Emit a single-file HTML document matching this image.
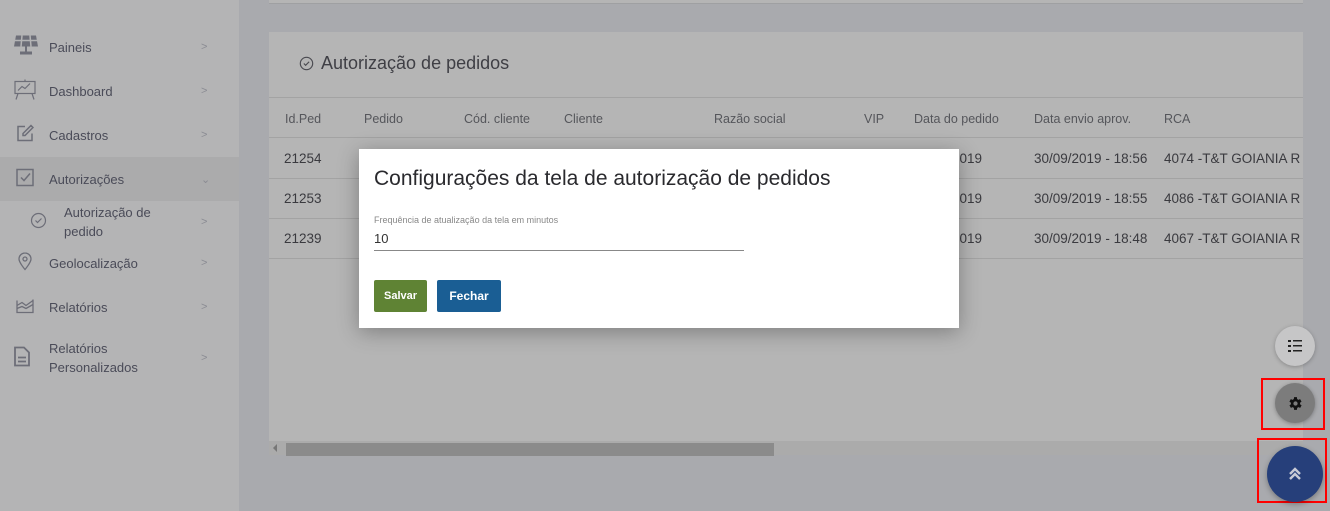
<!DOCTYPE html>
<html><head><meta charset="utf-8"><style>
*{box-sizing:border-box;margin:0;padding:0}
body{width:1330px;height:511px;overflow:hidden;background:#a9aaae;font-family:"Liberation Sans",sans-serif;position:relative}
.side{position:absolute;left:0;top:0;width:239px;height:511px;background:#b4b4b5}
.item{position:absolute;left:0;width:239px;height:44px;display:flex;align-items:center;color:#4a4b58;font-size:13px}
.item .ic{position:absolute;left:13px;top:50%;transform:translateY(-50%)}
.item .t{position:absolute;left:49px}
.item .ch{position:absolute;left:201px;color:#8a8b93;font-size:11px}
.topcard{position:absolute;left:269px;top:0;width:1034px;height:4px;background:#b5b5b5;border-bottom:1px solid #9fa0a2}
.card{position:absolute;left:269px;top:32px;width:1034px;height:423px;background:#b5b5b5}
.title{position:absolute;left:30px;top:21px;font-size:18px;color:#3f3f45;display:flex;align-items:center;gap:7px}
.hline{position:absolute;left:0;width:1034px;height:1px;background:#a3a3a3}
.th{position:absolute;top:80px;font-size:12.5px;color:#55565b}
.td{position:absolute;font-size:13.5px;color:#3a3a3f}
.scroll{position:absolute;left:0;top:409px;width:1034px;height:14px;background:#ababab}
.thumb{position:absolute;left:17px;top:2px;width:488px;height:13px;background:#8b8b8b}
.modal{position:absolute;left:359px;top:149px;width:600px;height:179px;background:#fff;box-shadow:0 4px 20px rgba(0,0,0,.3)}
.fab{position:absolute;border-radius:50%;display:flex;align-items:center;justify-content:center}
.red{position:absolute;border:2px solid #f00}
</style></head><body>
<div class="side">
 <div class="item" style="top:25px;background:transparent"><span class="ic"><svg width="26" height="22" viewBox="0 0 26 22"><path d="M3 1h20l2 11H1z" fill="#6d6e78"/><path d="M9 1l-1 11M17 1l1 11M2 6h22" stroke="#b4b4b5" stroke-width="1.5"/><rect x="12" y="12" width="2" height="5" fill="#6d6e78"/><rect x="7" y="17" width="12" height="3" fill="#6d6e78"/></svg></span><span class="t">Paineis</span><span class="ch">&gt;</span></div>
 <div class="item" style="top:69px"><span class="ic"><svg width="24" height="22" viewBox="0 0 24 22" fill="none" stroke="#6d6e78" stroke-width="1.2"><rect x="2" y="3" width="20" height="12"/><path d="M5 12l4-4 3 2 5-5M5 15l-2 6M19 15l2 6M12 1v2"/></svg></span><span class="t">Dashboard</span><span class="ch">&gt;</span></div>
 <div class="item" style="top:113px"><span class="ic" style="left:16px"><svg width="18" height="18" viewBox="0 0 18 18" fill="none" stroke="#6d6e78" stroke-width="1.5"><path d="M9 2H2v14h14V9"/><path d="M15 1l2 2-8 8H7V9z"/></svg></span><span class="t">Cadastros</span><span class="ch">&gt;</span></div>
 <div class="item" style="top:157px;background:#ababac"><span class="ic" style="left:16px"><svg width="18" height="18" viewBox="0 0 18 18" fill="none" stroke="#6d6e78" stroke-width="1.5"><rect x="1" y="1" width="16" height="16"/><path d="M5 9l3 3 6-7"/></svg></span><span class="t">Autorizações</span><span class="ch">&#8964;</span></div>
 <div class="item" style="top:201px;height:42px"><span class="ic" style="left:30px"><svg width="17" height="17" viewBox="0 0 17 17" fill="none" stroke="#6d6e78" stroke-width="1.2"><circle cx="8.5" cy="8.5" r="7"/><path d="M5.5 8.5l2 2 4-4"/></svg></span><span class="t" style="left:64px;line-height:19px">Autorização de<br>pedido</span><span class="ch">&gt;</span></div>
 <div class="item" style="top:241px"><span class="ic" style="left:18px"><svg width="14" height="18" viewBox="0 0 14 18" fill="none" stroke="#6d6e78" stroke-width="1.3"><path d="M7 17S1 10 1 6.5a6 6 0 0112 0C13 10 7 17 7 17z"/><circle cx="7" cy="6.5" r="2"/></svg></span><span class="t">Geolocalização</span><span class="ch">&gt;</span></div>
 <div class="item" style="top:285px"><span class="ic" style="left:16px"><svg width="18" height="16" viewBox="0 0 18 16" fill="none" stroke="#6d6e78" stroke-width="1.3"><path d="M1 3v12h16V2"/><path d="M1 8l5-3 4 3 7-5M1 11l5-2 4 2 7-4"/></svg></span><span class="t">Relatórios</span><span class="ch">&gt;</span></div>
 <div class="item" style="top:336px;height:44px"><span class="ic" style="left:14px"><svg width="16" height="20" viewBox="0 0 16 20" fill="none" stroke="#6d6e78" stroke-width="1.8"><path d="M1 1h9l5 5v13H1z"/><path d="M4 11h8M4 15h8"/></svg></span><span class="t" style="line-height:19px">Relatórios<br>Personalizados</span><span class="ch">&gt;</span></div>
</div>
<div class="topcard"></div>
<div class="card">
 <div class="title"><svg width="15" height="15" viewBox="0 0 17 17" fill="none" stroke="#4a4a50" stroke-width="1.3"><circle cx="8.5" cy="8.5" r="7"/><path d="M5.5 8.5l2 2 4-4"/></svg>Autorização de pedidos</div>
 <div class="hline" style="top:65px"></div>
 <span class="th" style="left:16px">Id.Ped</span><span class="th" style="left:95px">Pedido</span><span class="th" style="left:195px">Cód. cliente</span><span class="th" style="left:295px">Cliente</span><span class="th" style="left:445px">Razão social</span><span class="th" style="left:595px">VIP</span><span class="th" style="left:645px">Data do pedido</span><span class="th" style="left:765px">Data envio aprov.</span><span class="th" style="left:895px">RCA</span>
 <div class="hline" style="top:105px"></div>
 <div class="hline" style="top:146px"></div>
 <div class="hline" style="top:186px"></div>
 <div class="hline" style="top:226px"></div>
 <span class="td" style="left:15px;top:119px">21254</span><span class="td" style="left:683px;top:119px">2019</span><span class="td" style="left:765px;top:119px">30/09/2019 - 18:56</span><span class="td" style="left:895px;top:119px;white-space:nowrap;width:139px;overflow:hidden">4074 -T&amp;T GOIANIA R</span>
 <span class="td" style="left:15px;top:159px">21253</span><span class="td" style="left:683px;top:159px">2019</span><span class="td" style="left:765px;top:159px">30/09/2019 - 18:55</span><span class="td" style="left:895px;top:159px;white-space:nowrap;width:139px;overflow:hidden">4086 -T&amp;T GOIANIA R</span>
 <span class="td" style="left:15px;top:199px">21239</span><span class="td" style="left:683px;top:199px">2019</span><span class="td" style="left:765px;top:199px">30/09/2019 - 18:48</span><span class="td" style="left:895px;top:199px;white-space:nowrap;width:139px;overflow:hidden">4067 -T&amp;T GOIANIA R</span>
 <div class="scroll"><span style="position:absolute;left:4px;top:3px;width:0;height:0;border-top:4px solid transparent;border-bottom:4px solid transparent;border-right:4px solid #777"></span><div class="thumb"></div></div>
</div>
<div class="modal">
 <div style="position:absolute;left:15px;top:18px;font-size:21px;color:#2a2a2e">Configurações da tela de autorização de pedidos</div>
 <div style="position:absolute;left:15px;top:66px;font-size:9px;color:#888">Frequência de atualização da tela em minutos</div>
 <div style="position:absolute;left:15px;top:82px;font-size:13px;color:#333">10</div>
 <div style="position:absolute;left:15px;top:101px;width:370px;height:1px;background:#888"></div>
 <div style="position:absolute;left:15px;top:131px;width:53px;height:32px;background:#5f8334;border-radius:2px;color:#fff;font-size:11px;font-weight:bold;display:flex;align-items:center;justify-content:center">Salvar</div>
 <div style="position:absolute;left:78px;top:131px;width:64px;height:32px;background:#1a5e94;border-radius:2px;color:#fff;font-size:12px;font-weight:bold;display:flex;align-items:center;justify-content:center">Fechar</div>
</div>
<div class="fab" style="left:1275px;top:326px;width:40px;height:40px;background:#c6c6c7;box-shadow:0 1px 4px rgba(0,0,0,.25)"><svg width="14" height="12" viewBox="0 0 14 12" fill="#222"><rect x="0" y="0" width="3" height="2"/><rect x="5" y="0" width="9" height="1.5"/><rect x="0" y="5" width="3" height="2"/><rect x="5" y="5" width="9" height="1.5"/><rect x="0" y="10" width="3" height="2"/><rect x="5" y="10" width="9" height="1.5"/></svg></div>
<div class="red" style="left:1261px;top:378px;width:64px;height:52px"></div>
<div class="fab" style="left:1275px;top:383px;width:40px;height:40px;background:#7c7c7c;box-shadow:0 1px 4px rgba(0,0,0,.3)"><svg width="17" height="17" viewBox="0 0 24 24" fill="#111"><path fill-rule="evenodd" d="M19.4 13a7.5 7.5 0 000-2l2.1-1.6-2-3.5-2.5 1a7 7 0 00-1.7-1L15 3h-4l-.4 2.8a7 7 0 00-1.7 1l-2.5-1-2 3.5L6.6 11a7.5 7.5 0 000 2l-2.1 1.6 2 3.5 2.5-1a7 7 0 001.7 1L11 21h4l.4-2.8a7 7 0 001.7-1l2.5 1 2-3.5zM13 15a3 3 0 110-6 3 3 0 010 6z" transform="translate(-1 0)"/></svg></div>
<div class="red" style="left:1257px;top:438px;width:70px;height:65px"></div>
<div class="fab" style="left:1267px;top:446px;width:56px;height:56px;background:#263f7a;box-shadow:0 2px 6px rgba(0,0,0,.3)"><svg width="12" height="14" viewBox="0 0 12 14" fill="none" stroke="#c8cbd6" stroke-width="2.4"><path d="M1 7l5-5 5 5M1 12l5-5 5 5"/></svg></div>
</body></html>
